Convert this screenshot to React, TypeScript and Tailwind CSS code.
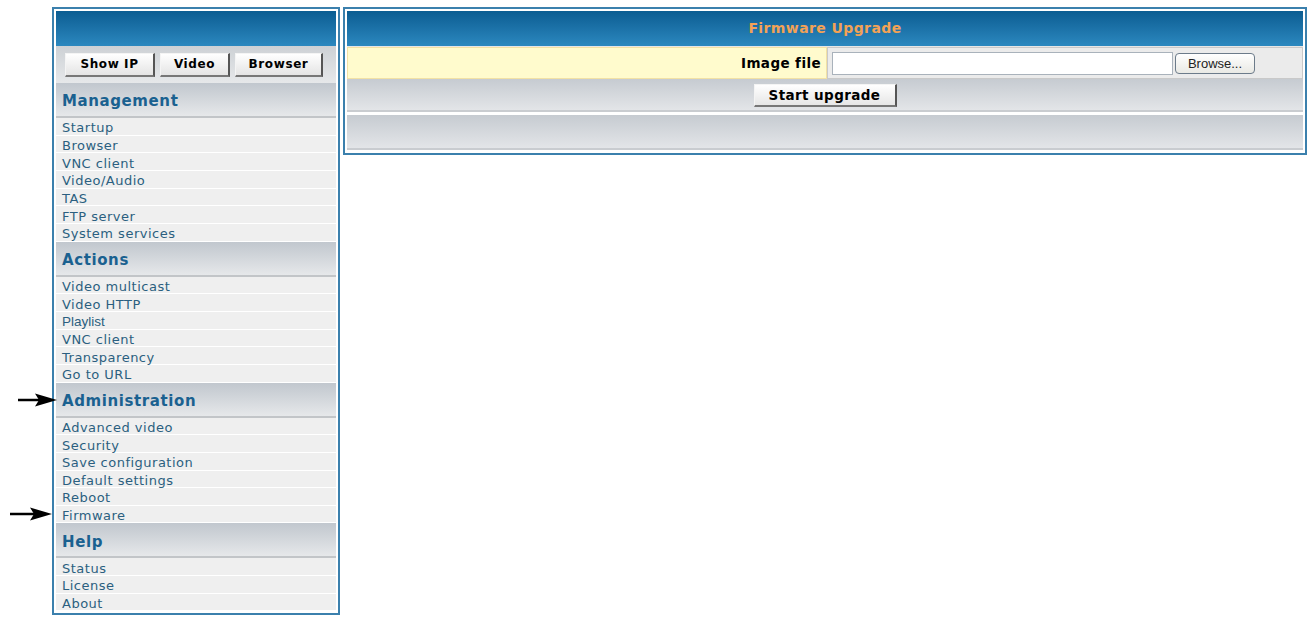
import React from "react";

const verdana = { fontFamily: '"DejaVu Sans", Verdana, sans-serif' };

type Section = { title: string; items: string[]; arrow?: boolean };

const sections: Section[] = [
  {
    title: "Management",
    items: ["Startup", "Browser", "VNC client", "Video/Audio", "TAS", "FTP server", "System services"],
  },
  {
    title: "Actions",
    items: ["Video multicast", "Video HTTP", "Playlist", "VNC client", "Transparency", "Go to URL"],
  },
  {
    title: "Administration",
    arrow: true,
    items: ["Advanced video", "Security", "Save configuration", "Default settings", "Reboot", "Firmware"],
  },
  { title: "Help", items: ["Status", "License", "About"] },
];

// little black pointer used in the manual pages
const Arrow = ({ width }: { width: number }) => (
  <svg width={width} height="14" viewBox={`0 0 ${width} 14`} className="block">
    <line x1="0" y1="7" x2={width - 18} y2="7" stroke="black" strokeWidth="2.5" />
    <polygon points={`${width - 22},0.5 ${width},7 ${width - 22},13.5 ${width - 18},7`} fill="black" />
  </svg>
);

const ToolButton = ({ label, className }: { label: string; className: string }) => (
  <button
    className={`h-[24px] bg-gradient-to-b from-white to-[#e4e4e4] border-t border-l border-t-[#f4f4f4] border-l-[#f4f4f4] border-r-2 border-b-2 border-r-[#555] border-b-[#777] text-[12px] font-bold tracking-[0.6px] text-black ${className}`}
    style={verdana}
  >
    {label}
  </button>
);

const SectionHeader = ({ title, arrow }: { title: string; arrow?: boolean }) => (
  <div className="relative h-[35px] flex items-center pl-[6px] pt-[4px] bg-gradient-to-b from-[#c1c7ce] to-[#e6e8ea] border-b-2 border-b-[#c2c5c8]">
    {arrow && (
      <div className="absolute left-[-38px] top-[10px]">
        <Arrow width={39} />
      </div>
    )}
    <span className="text-[15px] font-bold tracking-[0.6px] text-[#1a6190]" style={verdana}>
      {title}
    </span>
  </div>
);

const MenuItem = ({ label }: { label: string }) => {
  const isPlaylist = label === "Playlist";
  return (
    <div className="relative h-[17.67px] flex items-center pl-[6px] pt-[3px] bg-[#efefef] border-b border-b-white">
      {label === "Firmware" && (
        <div className="absolute left-[-46px] top-[1px]">
          <Arrow width={42} />
        </div>
      )}
      <span
        className={
          isPlaylist
            ? "text-[13.5px] leading-none text-[#2b5f80]"
            : "text-[13px] leading-none tracking-[0.5px] text-[#2b5f80]"
        }
        style={isPlaylist ? { fontFamily: '"Liberation Sans", Arial, sans-serif' } : verdana}
      >
        {label}
      </span>
    </div>
  );
};

const Sidebar = () => (
  <div className="w-[288px] border-2 border-[#3b80ad] bg-white p-[2px]">
    <div className="h-[35px] bg-gradient-to-b from-[#0b5d92] to-[#2b88bf]" />
    <div className="h-[37px] flex items-center gap-[5px] pl-[9px] bg-gradient-to-b from-[#cdd1d5] to-[#e6e8ea]">
      <ToolButton label="Show IP" className="w-[90px]" />
      <ToolButton label="Video" className="w-[70px]" />
      <ToolButton label="Browser" className="w-[88px]" />
    </div>
    {sections.map((s) => (
      <div key={s.title}>
        <SectionHeader title={s.title} arrow={s.arrow} />
        {s.items.map((it, i) => (
          <MenuItem key={s.title + i} label={it} />
        ))}
      </div>
    ))}
  </div>
);

const FirmwarePanel = () => (
  <div className="w-[964px] border-2 border-[#3b80ad] bg-white p-[2px] pb-[3px]">
    <div className="h-[35px] flex items-center justify-center bg-gradient-to-b from-[#0b5d92] to-[#2b88bf]">
      <span className="text-[14px] font-bold tracking-[0.4px] text-[#f3a256]" style={verdana}>
        Firmware Upgrade
      </span>
    </div>
    <div className="h-[33px] flex border-t border-t-[#e6e6e6]">
      <div className="w-[480px] flex items-center justify-end pr-[5px] bg-[#fffbcd] border border-[#f2e1a4]">
        <span className="text-[13.5px] font-bold tracking-[0.4px] text-black" style={verdana}>
          Image file
        </span>
      </div>
      <div className="flex-1 flex items-center pl-[4px] bg-[#ebebeb] border border-[#c9c9c9]">
        <div className="w-[341px] h-[23px] bg-white border border-[#a9b2bb]" />
        <button
          className="ml-[2px] w-[80px] h-[21px] rounded-[4px] border border-[#6c7b8a] bg-gradient-to-b from-white to-[#e9e9e4] text-[13px] text-[#222]"
          style={{ fontFamily: '"Liberation Sans", Arial, sans-serif' }}
        >
          Browse...
        </button>
      </div>
    </div>
    <div className="h-[33px] flex items-center justify-center pt-[2px] bg-gradient-to-b from-[#c6cbd1] to-[#e3e5e8] border-b-2 border-b-[#c9ccd0]">
      <button
        className="w-[143px] h-[23px] bg-gradient-to-b from-white to-[#e6e6e6] border-t border-l border-t-[#f4f4f4] border-l-[#f4f4f4] border-r-2 border-b-2 border-r-[#555] border-b-[#777] text-[13.5px] font-bold tracking-[0.4px] text-black"
        style={verdana}
      >
        Start upgrade
      </button>
    </div>
    <div className="h-[3px] bg-white" />
    <div className="h-[35px] bg-gradient-to-b from-[#c6cbd1] to-[#e3e5e8] border-b-2 border-b-[#c9ccd0]" />
  </div>
);

export default function App() {
  return (
    <div className="w-[1312px] h-[623px] bg-white flex items-start gap-[3px] pt-[7px] pl-[52px]">
      <Sidebar />
      <FirmwarePanel />
    </div>
  );
}
